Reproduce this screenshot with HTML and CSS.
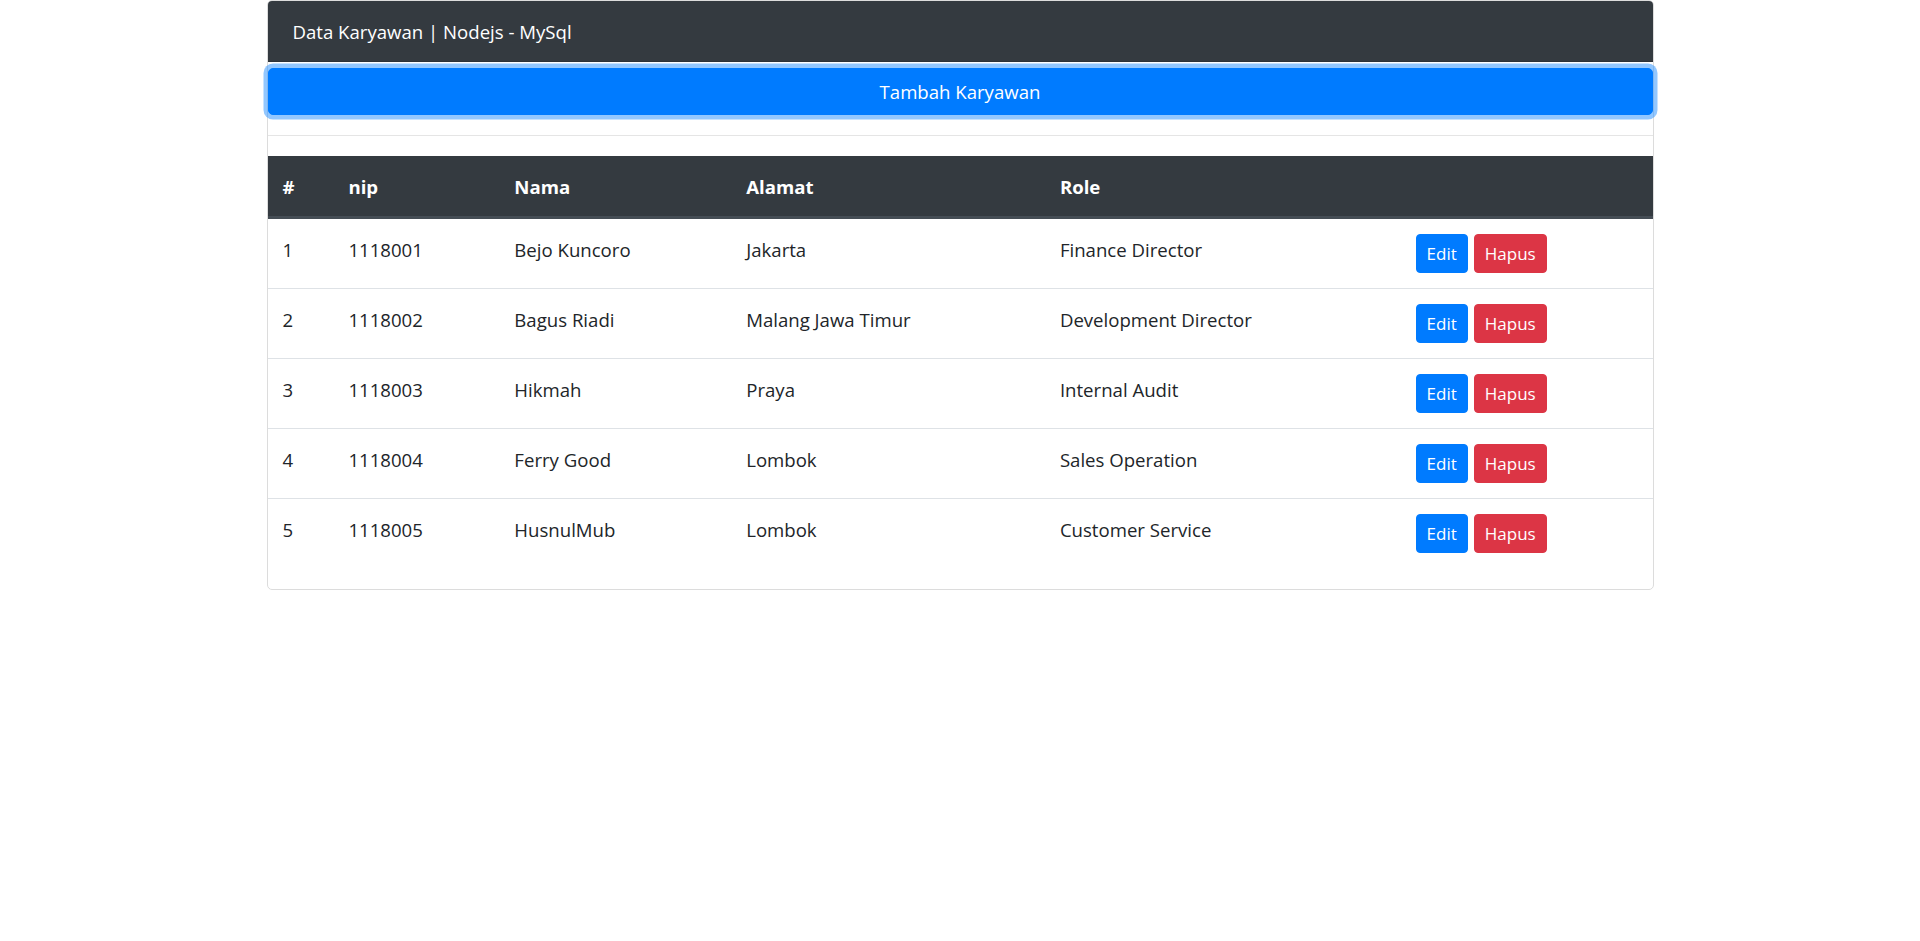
FILE: index.html
```html
<!DOCTYPE html>
<html lang="id">
<head>
<meta charset="utf-8">
<title>Data Karyawan</title>
<link rel="stylesheet" href="styles.css">
</head>
<body>
<div class="container">
  <div class="card">
    <div class="card-header">Data Karyawan | Nodejs - MySql</div>
    <div class="card-body">
      <button class="btn btn-primary btn-block btn-focus" type="button">Tambah Karyawan</button>
      <hr class="divider">
      <table class="table">
        <thead>
          <tr>
            <th class="col-no">#</th>
            <th class="col-nip">nip</th>
            <th class="col-nama">Nama</th>
            <th class="col-alamat">Alamat</th>
            <th class="col-role">Role</th>
            <th class="col-aksi"></th>
          </tr>
        </thead>
        <tbody>
          <tr>
            <td>1</td><td>1118001</td><td>Bejo Kuncoro</td><td>Jakarta</td><td>Finance Director</td>
            <td><div class="actions"><a class="btn btn-sm btn-primary">Edit</a><a class="btn btn-sm btn-danger">Hapus</a></div></td>
          </tr>
          <tr>
            <td>2</td><td>1118002</td><td>Bagus Riadi</td><td>Malang Jawa Timur</td><td>Development Director</td>
            <td><div class="actions"><a class="btn btn-sm btn-primary">Edit</a><a class="btn btn-sm btn-danger">Hapus</a></div></td>
          </tr>
          <tr>
            <td>3</td><td>1118003</td><td>Hikmah</td><td>Praya</td><td>Internal Audit</td>
            <td><div class="actions"><a class="btn btn-sm btn-primary">Edit</a><a class="btn btn-sm btn-danger">Hapus</a></div></td>
          </tr>
          <tr>
            <td>4</td><td>1118004</td><td>Ferry Good</td><td>Lombok</td><td>Sales Operation</td>
            <td><div class="actions"><a class="btn btn-sm btn-primary">Edit</a><a class="btn btn-sm btn-danger">Hapus</a></div></td>
          </tr>
          <tr>
            <td>5</td><td>1118005</td><td>HusnulMub</td><td>Lombok</td><td>Customer Service</td>
            <td><div class="actions"><a class="btn btn-sm btn-primary">Edit</a><a class="btn btn-sm btn-danger">Hapus</a></div></td>
          </tr>
        </tbody>
      </table>
    </div>
  </div>
</div>
</body>
</html>
```
FILE: styles.css
```css
* { box-sizing: border-box; }

html, body {
  margin: 0;
  padding: 0;
  background: #fff;
}

body {
  font-family: "Open Sans", "Noto Sans", Arial, sans-serif;
  font-size: 18.6px;
  line-height: 30px;
  color: #212529;
}

.container {
  width: 1387px;
  margin: 0 auto;
}

.card {
  border: 1px solid #dcdcdc;
  border-radius: 5px;
  background: #fff;
}

.card-header {
  background: #343a40;
  color: #fff;
  padding: 16px 25px 14px;
  line-height: 30px;
  border-bottom: 1px solid rgba(0, 0, 0, 0.125);
  border-radius: 4px 4px 0 0;
}

.card-body {
  padding: 6px 0 0;
}

.btn {
  display: inline-block;
  font-family: inherit;
  font-weight: 400;
  text-align: center;
  border: 1px solid transparent;
  color: #fff;
  cursor: pointer;
  text-decoration: none;
}

.btn-block {
  display: block;
  width: 100%;
  height: 47px;
  padding: 1px 15px 0;
  font-size: 18.6px;
  line-height: 44px;
  border-radius: 5px;
}

.btn-focus {
  box-shadow: 0 0 0 4.5px rgba(38, 143, 255, 0.5);
}

.btn-primary {
  background: #007bff;
  border-color: #007bff;
}

.btn-danger {
  background: #dc3545;
  border-color: #dc3545;
}

.btn-sm {
  height: 39px;
  padding: 1px 10px 0;
  font-size: 17px;
  line-height: 36px;
  border-radius: 4px;
}

.divider {
  margin: 20px 0;
  border: 0;
  border-top: 1px solid rgba(0, 0, 0, 0.1);
  height: 0;
}

.table {
  width: 100%;
  border-collapse: collapse;
  margin-bottom: 20px;
}

.table th,
.table td {
  padding: 16px 15px 14px;
  text-align: left;
  vertical-align: top;
}

.table thead th {
  background: #343a40;
  color: #fff;
  font-weight: 700;
  vertical-align: bottom;
  border-bottom: 3px solid #454d55;
}

.table td {
  border-top: 1px solid #dee2e6;
  height: 70px;
}

.table td:last-child {
  padding-top: 15px;
  padding-bottom: 15px;
}

.table tbody tr:first-child td {
  border-top: 0;
}

.col-no { width: 66px; }
.col-nip { width: 166px; }
.col-nama { width: 232px; }
.col-alamat { width: 314px; }
.col-role { width: 356px; }
.col-aksi { width: 252px; }

.actions {
  display: flex;
  gap: 6px;
}
```
